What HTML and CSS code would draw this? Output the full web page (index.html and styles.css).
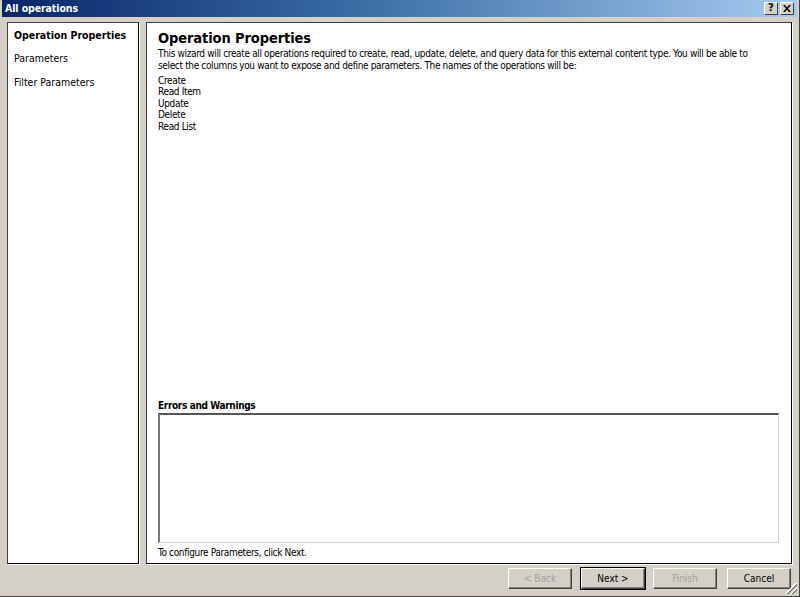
FILE: index.html
```html
<!DOCTYPE html>
<html lang="en">

<head>
    <meta charset="UTF-8">
    <title>All operations</title>
    <link rel="stylesheet" href="styles.css">
</head>

<body>
    <div class="window">
        <div class="titlebar">
            <span class="title">All operations</span>
            <div class="title-buttons">
                <span class="cap-button">?</span>
                <span class="cap-button">
                    <svg viewBox="0 0 8 7" width="8" height="7">
                        <path d="M0 0h2l2 2.5L6 0h2L5 3.5 8 7H6L4 4.5 2 7H0l3-3.5z" fill="#000"/>
                    </svg>
                </span>
            </div>
        </div>

        <div class="main">
            <!-- wizard steps -->
            <ul class="steps">
                <li class="step active">Operation Properties</li>
                <li class="step">Parameters</li>
                <li class="step">Filter Parameters</li>
            </ul>

            <div class="page">
                <h1>Operation Properties</h1>
                <p class="intro">This wizard will create all operations required to create, read, update, delete, and query data for this external content type. You will be able to select the columns you want to expose and define parameters. The names of the operations will be:</p>
                <ul class="op-list">
                    <li>Create</li>
                    <li>Read Item</li>
                    <li>Update</li>
                    <li>Delete</li>
                    <li>Read List</li>
                </ul>

                <div class="errors">
                    <h2>Errors and Warnings</h2>
                    <div class="errors-box"></div>
                </div>
                <p class="hint">To configure Parameters, <span class="link">click Next</span>.</p>
            </div>
        </div>

        <div class="footer">
            <button class="btn back" disabled>&lt; Back</button>
            <button class="btn default">Next &gt;</button>
            <button class="btn" disabled>Finish</button>
            <button class="btn cancel">Cancel</button>
            <span class="grip"></span>
        </div>
    </div>
</body>

</html>
```

FILE: styles.css
```css
* {
    margin: 0;
    padding: 0;
    box-sizing: border-box;
}

body {
    font-family: Tahoma, "DejaVu Sans Condensed", "DejaVu Sans", sans-serif;
    font-size: 11px;
    color: #000;
    background-color: #d4d0c8;
    width: 800px;
    height: 597px;
    overflow: hidden;
}

.window {
    width: 800px;
    height: 597px;
    display: flex;
    flex-direction: column;
    background-color: #d4d0c8;
    border-right: 1px solid #404040;
    border-bottom: 1px solid #404040;
    padding: 0 3px 3px 3px;
    position: relative;
}

.titlebar {
    height: 18px;
    margin: 0 -1px 0 -1px;
    display: flex;
    align-items: center;
    justify-content: space-between;
    padding: 0 3px 0 3px;
    background: linear-gradient(to right, #0a246a 0%, #3a6ea5 45%, #a6caf0 100%);
}

.title {
    color: #fff;
    font-family: "DejaVu Sans Condensed", "DejaVu Sans", sans-serif;
    font-weight: bold;
    font-size: 10.5px;
    letter-spacing: -0.1px;
}

.title-buttons {
    display: flex;
    gap: 2px;
}

.cap-button {
    width: 14px;
    height: 13px;
    display: flex;
    align-items: center;
    justify-content: center;
    background-color: #d4d0c8;
    border: 1px solid;
    border-color: #fff #404040 #404040 #fff;
    font-family: "DejaVu Sans", sans-serif;
    font-weight: bold;
    font-size: 10px;
    line-height: 1;
}

.main {
    flex: 1;
    display: flex;
    gap: 7px;
    padding: 5px 4px 0 4px;
}

.steps {
    list-style: none;
    width: 132px;
    height: 542px;
    background-color: #fff;
    border: 1px solid;
    border-color: #404040 #000 #000 #404040;
    box-shadow: 1px 1px 0 #fff;
    padding: 5px 0 0 6px;
    font-family: "DejaVu Sans Condensed", "DejaVu Sans", sans-serif;
    font-size: 10.5px;
}

.step {
    height: 23.5px;
    line-height: 14px;
}

.step.active {
    font-weight: bold;
}

.page {
    width: 646px;
    height: 542px;
    background-color: #fff;
    border: 1px solid;
    border-color: #404040 #000 #000 #404040;
    box-shadow: 1px 1px 0 #fff;
    padding: 6px 12px 0 11px;
    display: flex;
    flex-direction: column;
    font-family: "DejaVu Sans Condensed", "DejaVu Sans", sans-serif;
    font-size: 10px;
    letter-spacing: -0.35px;
}

h1 {
    font-size: 14.5px;
    font-weight: bold;
    line-height: 19px;
    letter-spacing: -0.1px;
}

.intro {
    max-width: 598px;
    line-height: 12px;
}

.op-list {
    list-style: none;
    margin-top: 3px;
    line-height: 11.5px;
}

.errors {
    margin-top: auto;
}

h2 {
    font-size: 10px;
    font-weight: bold;
    line-height: 12px;
    margin-bottom: 1px;
}

.errors-box {
    height: 130px;
    border: 1px solid #d4d0c8;
    border-top: 2px solid #555;
    border-left: 2px solid #777;
}

.hint {
    line-height: 12px;
    margin: 4px 0 4px 0;
}

.link {
    color: #000;
}

.footer {
    height: 32px;
    display: flex;
    justify-content: flex-end;
    align-items: center;
    gap: 8px;
    padding: 0 5px 0 0;
}

.btn {
    width: 64px;
    height: 21px;
    font-family: "DejaVu Sans Condensed", "DejaVu Sans", sans-serif;
    font-size: 10px;
    color: #000;
    background-color: #d4d0c8;
    border: 1px solid;
    border-color: #fff #404040 #404040 #fff;
    box-shadow: inset -1px -1px 0 #808080;
}

.btn:disabled {
    color: #a0a0a0;
}

.btn.back {
    margin-right: 1px;
}

.btn.default {
    outline: 1px solid #000;
}

.btn.cancel {
    margin-left: 2px;
}

.grip {
    position: absolute;
    right: 2px;
    bottom: 2px;
    width: 11px;
    height: 11px;
    background: linear-gradient(135deg, transparent 45%, #fff 45%, #fff 52%, #808080 52%, #808080 60%, transparent 60%, transparent 70%, #fff 70%, #fff 76%, #808080 76%, #808080 84%, transparent 84%);
}
```
